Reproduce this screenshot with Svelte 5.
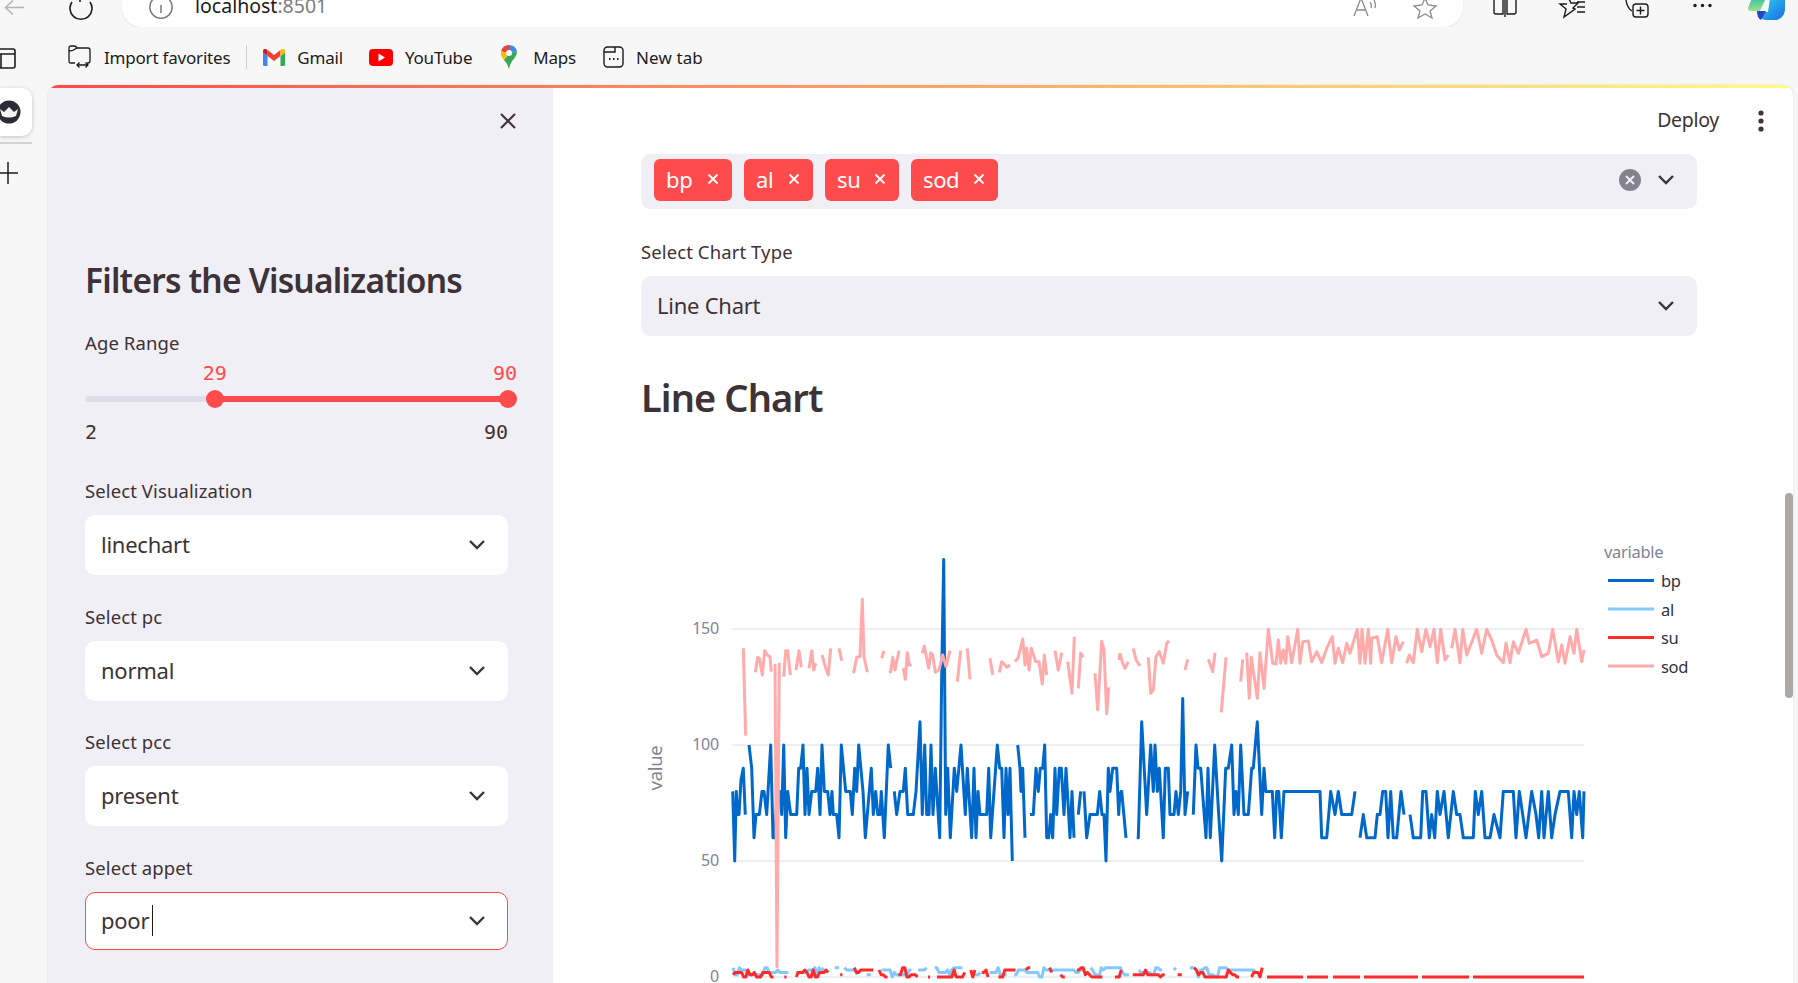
<script lang="ts">
	const selects = [
		{ label: "Select Visualization", value: "linechart" },
		{ label: "Select pc", value: "normal" },
		{ label: "Select pcc", value: "present" },
	];
	const tags = [
		{ name: "bp", width: 78 },
		{ name: "al", width: 69 },
		{ name: "su", width: 74 },
		{ name: "sod", width: 87 },
	];
	const legend = [
		{ name: "bp", color: "#0068c9" },
		{ name: "al", color: "#83c9ff" },
		{ name: "su", color: "#ff2b2b" },
		{ name: "sod", color: "#ffabab" },
	];

	const sliderMin = 2;
	const sliderMax = 90;
	const range = [29, 90];
	const pct = (v: number) => ((v - sliderMin) / (sliderMax - sliderMin)) * 100;

	// chart coords are page pixels, the traces were read off at 3x
	const yOf = (v: number) => 977 - v * 2.32;
	const ticks = [150, 100, 50, 0];

	function trace(raw: string, x0: number, byValue: boolean): string[] {
		return raw.split("|").map((seg) =>
			seg
				.trim()
				.split(",")
				.map((p) => {
					const [a, b] = p.trim().split(" ").map(Number);
					const y = byValue ? yOf(b) : 540 + b / 3;
					return `${(x0 + a / 3).toFixed(1)},${y.toFixed(1)}`;
				})
				.join(" "),
		);
	}

	const bp = [
		...trace(
			"278 80,284 50,289 80,292 70,297 70,303 85,310 90,316 70|327 100,335 90,342 60,348 70,358 70,366 80,372 80,380 70,392 100,399 60,405 60,411 80,419 80,425 70,431 100,437 60,443 80,452 70,470 70,476 90,482 90,489 100,495 70,501 90,507 70,515 80,527 80,533 90,540 70,546 100,553 80,563 80,570 70,576 80,580 70,590 70,597 60,604 100,617 80,631 80,637 70,644 90,650 80,656 100,669 80,676 60,682 70,694 90,700 70,707 80,713 70,720 70,724 80,733 60,745 100,752 90|763 80,770 70,780 80,790 80,796 90,803 70,820 70,828 80,840 110,847 70,854 100,860 70,867 70,873 100,879 70,886 90,899 60,905 130,911 180,917 70,923 90,931 60,943 90,950 80,963 100,976 70,982 90,995 60,1002 90,1008 60,1014 80,1020 70,1040 70,1046 90,1052 60,1062 80,1072 100,1079 90,1085 90,1092 60,1098 90,1104 70,1110 90,1117 50|1133 100,1140 90,1143 80,1148 90,1155 60|1170 70,1180 70,1188 90,1195 80,1201 90,1208 90,1214 100,1220 60,1226 60,1232 70,1238 60,1245 90,1250 70,1258 90,1264 90,1272 70,1278 90,1290 60,1296 80,1302 60|1315 70,1322 80|1332 80,1340 60,1350 70,1372 70,1379 80,1386 70,1392 70,1398 50,1405 90,1410 80,1418 90,1430 90,1436 70,1440 80",
			640,
			true,
		),
		...trace(
			"0 80,5 80,18 60|50 60,55 60,65 110,80 70,92 100,100 80,105 100,112 80,118 90,130 60,136 90,145 90,150 70,162 70,168 80,175 70,182 80,188 120,195 70,203 80|220 70,228 100,234 90,242 90,258 60,264 90,271 60,284 100,296 70,305 50,317 90,325 90,335 100,342 70,348 80,355 70,362 100,372 70,385 70,395 90,400 90,412 110,425 70,432 90,437 80,457 80,464 60,470 80,476 80,484 60,492 80,600 80,605 60,620 60,632 80,645 70,655 80,665 70,695 70,705 80|720 60,730 70,740 60,765 60,772 70,780 70,788 80,797 80,804 60,812 80,820 60,830 60,843 80,852 70|870 70,880 60,902 60,908 80,918 80,928 60,935 70,944 60,952 80,960 70,972 80,985 60,1000 80,1010 70,1020 70,1030 60,1060 60,1066 80,1075 70,1085 80,1095 60,1110 60,1122 70,1140 60,1150 80,1180 80,1188 60,1198 80,1208 70,1218 60,1235 80,1248 70,1256 60,1265 80,1272 60,1285 80,1295 60,1305 70,1320 80,1345 80,1355 60,1362 80,1370 70,1378 80,1388 60,1392 80",
			1120,
			true,
		),
	];

	const sod = [
		...trace(
			"310 325,317 587|346 397,353 352,358 355,367 405,374 332,382 345,390 350,394 395|405 372,411 1280,418 368|431 410,437 332,443 332,451 405|468 390,477 332,484 382|507 385,515 332,521 390,527 370|546 345,556 380,565 405,572 325|597 325,605 362|637 397,642 395,650 352,660 350,667 178,672 350,682 397|725 355,732 332|747 397,752 395,758 352,765 390,777 332|790 385,796 418,802 338,808 375,815 375|847 340,853 318,858 345,866 385,872 338,878 345,886 397,897 390,908 345,918 380,930 332|952 425,962 332|982 325,990 418|1050 355,1058 405|1078 397,1085 365,1095 375,1100 382,1110 375|1125 365,1135 352,1148 297,1155 375,1160 325,1167 390,1174 325,1187 365,1197 365,1207 432,1213 345,1220 405|1245 332,1255 390,1265 338|1283 365,1296 460,1303 290|1315 445,1322 340,1330 352|1365 400,1373 510,1385 304,1392 330,1400 522,1406 442|1437 360,1440 340",
			640,
			false,
		),
		...trace(
			"0 340,8 370,15 385,25 365|40 325,48 360,60 378|85 352,92 460,100 450,108 350,118 335,130 370,140 310,147 302|195 390,203 358|265 358,278 395,285 338|318 352,304 517|362 425,368 358|380 338,388 475,394 352,412 475,420 338,432 445,445 268,458 370,468 372,475 300,482 370,490 330,497 370,503 290,515 368,533 268,540 370,548 305,565 303,575 365,590 335,605 368,620 325,637 290,645 370,655 325,668 368,680 310,690 340,712 268,720 370,726 268,735 370,745 268,752 370,755 295,772 290,785 368,803 268,815 368,828 290,838 330,850 305|860 370,868 345,880 368,892 268,905 335,918 268,930 320,942 268,952 368,962 268,975 360,985 345|995 325,1005 268,1020 368,1028 268,1040 345,1070 268,1085 340,1100 268,1115 300,1130 345,1150 368,1158 310,1170 368,1180 305,1195 340,1218 268,1228 310,1250 300,1265 350,1285 340,1298 268,1315 365,1325 315,1335 370,1350 290,1362 340,1370 268,1385 365,1392 330",
			1120,
			false,
		),
	];

	// al and su stay in single digits near the axis: clumps of small bumps with gaps
	function noise(seed: number, maxV: number, skew: number, gapRate: number, gapLen: number): string[] {
		let s = seed;
		const rnd = () => {
			s = (s * 1664525 + 1013904223) % 4294967296;
			return s / 4294967296;
		};
		const out: string[] = [];
		let cur: string[] = [];
		let prev = 0;
		for (let x = 733; x < 1264; x += 2.13) {
			if (rnd() < gapRate) {
				if (cur.length > 1) out.push(cur.join(" "));
				cur = [];
				x += 1 + rnd() * gapLen;
				continue;
			}
			const v = Math.round(Math.pow(rnd(), skew) * maxV);
			// half the points keep the last value, which gives the flat blocks
			prev = rnd() < 0.5 ? prev : v;
			cur.push(`${x.toFixed(1)},${yOf(prev).toFixed(1)}`);
		}
		if (cur.length > 1) out.push(cur.join(" "));
		return out;
	}
	const al = noise(7, 4, 0.6, 0.09, 7);
	const su = noise(23, 4, 1.7, 0.08, 8);
	const suFlat = [
		[1267, 1303],
		[1307, 1328],
		[1333, 1360],
		[1364, 1418],
		[1422, 1469],
		[1473, 1584],
	];
</script>

<div class="toolbar">
	<svg class="toolbar__left" width="122" height="27" viewBox="0 0 122 27" fill="none">
		<path d="M24 7.5H6M13 0.5 5.5 7.5l7.5 7" stroke="#b5b5b5" stroke-width="1.6" />
		<path d="M72 2a11 11 0 1 0 18 0M80 -3v5" stroke="#1c1c1c" stroke-width="1.6" />
	</svg>
	<div class="address">
		<svg width="26" height="27" viewBox="0 0 26 27" fill="none">
			<circle cx="13" cy="7" r="11.2" stroke="#7b7b7b" stroke-width="1.5" />
			<path d="M13 5v8" stroke="#7b7b7b" stroke-width="1.5" />
		</svg>
		<span class="address__text">localhost<span class="address__port">:8501</span></span>
		<span class="address__spacer"></span>
		<svg width="24" height="27" viewBox="0 0 24 27" fill="none">
			<path d="M1 16 8 -2l7 18M4 10h8M17 2q2 3 1 6M21 0q2 4 1 8" stroke="#8a8a8a" stroke-width="1.3" />
		</svg>
		<svg class="address__star" width="26" height="27" viewBox="0 0 26 27" fill="none">
			<path d="M13 -2 16 5 24 6 18 11 20 18 13 14 6 18 8 11 2 6 10 5Z" stroke="#8a8a8a" stroke-width="1.3" />
		</svg>
	</div>
	<svg class="toolbar__right" width="335" height="27" viewBox="1463 0 335 27" fill="none">
		<path d="M1503 -2v16h-7q-2 0-2-2V-2M1507 -2v16h7q2 0 2-2V-2M1505 -2v19" stroke="#1c1c1c" stroke-width="1.4" />
		<path d="M1568 -3l3 6 7 0-5 5 2 1-11 8 2-8-6-5 7 0M1577 2h8M1577 7h8M1577 12h8" stroke="#1c1c1c" stroke-width="1.4" />
		<path d="M1626 0q1 8 6 11" stroke="#1c1c1c" stroke-width="1.4" />
		<rect x="1633" y="4" width="15" height="13" rx="3" stroke="#1c1c1c" stroke-width="1.4" />
		<path d="M1640.5 6.5v8M1636.5 10.5h8" stroke="#1c1c1c" stroke-width="1.4" />
		<g fill="#1c1c1c"><circle cx="1695" cy="5.5" r="1.7" /><circle cx="1702.5" cy="5.5" r="1.7" /><circle cx="1710" cy="5.5" r="1.7" /></g>
		<defs>
			<linearGradient id="cop-a" x1="0" y1="0" x2="0" y2="1"><stop offset="0" stop-color="#36c2a0" /><stop offset="1" stop-color="#9fe08a" /></linearGradient>
			<linearGradient id="cop-b" x1="0" y1="0" x2="1" y2="1"><stop offset="0" stop-color="#2fd0f0" /><stop offset="1" stop-color="#1a6fe0" /></linearGradient>
		</defs>
		<path d="M1752 -2h14l-6 13h-10q-2 0-2-3Z" fill="url(#cop-a)" />
		<path d="M1770 -2h15v11q0 8-8 11h-11q-4 0-5-3l-2-5h9Z" fill="url(#cop-b)" />
		<path d="M1757 11h9l-5 9q-4-2-4-9Z" fill="#2447c8" />
	</svg>
</div>

<div class="bookmarks">
	<svg class="bookmarks__tabs" width="17" height="24" viewBox="0 0 17 24" fill="none">
		<path d="M-3 2h16q2 0 2 2v15q0 2-2 2H-3M-3 7h18M1 7v14" stroke="#1c1c1c" stroke-width="1.6" />
	</svg>
	<div class="bm bm--import">
		<svg width="24" height="24" viewBox="0 0 24 24" fill="none" stroke="#1c1c1c" stroke-width="1.3">
			<path d="M7 18H3q-2 0-2-2V3q0-2 2-2h3q2 0 3 2h11q2 0 2 2v11q0 2-2 2h-1" />
			<path d="M1 6q4 0 8-3M9 20h11M11.500 17.500 9 20l2.500 2.500M17.500 17.500 20 20l-2.500 2.500" />
		</svg>
		<span>Import favorites</span>
	</div>
	<span class="bm__sep"></span>
	<div class="bm">
		<svg width="22" height="17" viewBox="0 0 22 17">
			<path d="M1.500 17H4.500V7L0 3.500V15.500Q0 17 1.500 17Z" fill="#4285f4" />
			<path d="M17.500 17H20.500Q22 17 22 15.500V3.500L17.500 7Z" fill="#34a853" />
			<path d="M4.500 7 11 12 17.500 7V1L11 6 4.500 1Z" fill="#ea4335" />
			<path d="M0 3.500 4.500 7V1L3 0Q0 -1 0 2.500Z" fill="#c5221f" />
			<path d="M17.500 7 22 3.500V2.500Q22 -1 19 0L17.500 1Z" fill="#fbbc04" />
		</svg>
		<span>Gmail</span>
	</div>
	<div class="bm">
		<svg width="24" height="17" viewBox="0 0 24 17">
			<rect width="24" height="17" rx="4" fill="#f00" />
			<path d="M9.500 4.500 16 8.500 9.500 12.500Z" fill="#fff" />
		</svg>
		<span>YouTube</span>
	</div>
	<div class="bm bm--maps">
		<svg width="16" height="24" viewBox="0 0 16 24">
			<path d="M8 0Q14 0 16 6L8 9Z" fill="#4285f4" />
			<path d="M8 0Q2 0 0 6L8 9Z" fill="#ea4335" />
			<path d="M0 6Q-1 11 3 15L8 9Z" fill="#fbbc04" />
			<path d="M16 6Q16 11 11 16 9 19 8 24 7 19 3 15L8 9Z" fill="#34a853" />
			<circle cx="8" cy="8" r="3" fill="#fff" />
		</svg>
		<span>Maps</span>
	</div>
	<div class="bm bm--newtab">
		<svg width="21" height="22" viewBox="0 0 21 22" fill="none" stroke="#1c1c1c" stroke-width="1.4">
			<rect x="1" y="1" width="19" height="20" rx="3.500" />
			<path d="M1 6H12V1" />
			<path d="M6 13h1.500M10 13h1.500M14 13h1.500" stroke-width="2" />
		</svg>
		<span>New tab</span>
	</div>
</div>

<div class="window">
	<div class="rail">
		<div class="rail__tab">
			<svg width="32" height="32" viewBox="0 0 32 32">
				<circle cx="9" cy="16" r="11.500" fill="#2b2b38" />
				<path d="M0 13l4 3 5-5 5 5 4-3-2 7q-7 3-14 0Z" fill="#f4f4f4" />
			</svg>
		</div>
		<div class="rail__line"></div>
		<svg class="rail__plus" width="20" height="22" viewBox="0 0 20 22" stroke="#1c1c1c" stroke-width="1.5">
			<path d="M8 0v22M-2 11h20" />
		</svg>
	</div>

	<div class="app">
		<div class="app__stripe"></div>
		<div class="app__body">
			<aside class="side">
				<div class="side__top">
					<svg width="18" height="18" viewBox="0 0 18 18" stroke="#3d3237" stroke-width="2">
						<path d="M2 2l14 14M16 2 2 16" />
					</svg>
				</div>
				<h2 class="side__title">Filters the Visualizations</h2>
				<div class="label label--age">Age Range</div>
				<div class="slider">
					<div class="slider__values">
						{#each range as v}
							<span class="slider__value" style="left: {pct(v)}%">{v}</span>
						{/each}
					</div>
					<div class="slider__track">
						<div class="slider__fill" style="left: {pct(range[0])}%; width: {pct(range[1]) - pct(range[0])}%"></div>
						{#each range as v}
							<span class="slider__thumb" style="left: {pct(v)}%"></span>
						{/each}
					</div>
					<div class="slider__ticks"><span>{sliderMin}</span><span>{sliderMax}</span></div>
				</div>

				{#each selects as s}
					<div class="field">
						<div class="label">{s.label}</div>
						<div class="box box--white">
							<span class="box__value">{s.value}</span>
							<svg class="chev" width="18" height="18" viewBox="0 0 18 18" fill="none" stroke="#3d3237" stroke-width="2.400"><path d="M2 5l7 7 7-7" /></svg>
						</div>
					</div>
				{/each}
				<div class="field">
					<div class="label">Select appet</div>
					<div class="box box--white box--focus">
						<span class="box__value">poor</span><span class="caret"></span>
						<svg class="chev" width="18" height="18" viewBox="0 0 18 18" fill="none" stroke="#3d3237" stroke-width="2.400"><path d="M2 5l7 7 7-7" /></svg>
					</div>
				</div>
			</aside>

			<main class="main">
				<div class="topbar">
					<span class="topbar__deploy">Deploy</span>
					<svg width="6" height="22" viewBox="0 0 6 22" fill="#3d3237">
						<circle cx="3" cy="3" r="2.600" /><circle cx="3" cy="11" r="2.600" /><circle cx="3" cy="19" r="2.600" />
					</svg>
				</div>
				<div class="content">
					<div class="multi">
						{#each tags as t}
							<span class="tag" style="width: {t.width}px">
								{t.name}
								<svg width="12" height="12" viewBox="0 0 12 12" stroke="#fff" stroke-width="1.800"><path d="M1.500 1.500l9 9M10.500 1.500l-9 9" /></svg>
							</span>
						{/each}
						<span class="multi__spacer"></span>
						<svg class="multi__clear" width="22" height="22" viewBox="0 0 22 22">
							<circle cx="11" cy="11" r="11" fill="#83838f" />
							<path d="M7 7l8 8M15 7l-8 8" stroke="#f0eff5" stroke-width="2" />
						</svg>
						<svg class="chev" width="18" height="18" viewBox="0 0 18 18" fill="none" stroke="#3d3237" stroke-width="2.400"><path d="M2 5l7 7 7-7" /></svg>
					</div>

					<div class="label label--chart">Select Chart Type</div>
					<div class="box">
						<span class="box__value">Line Chart</span>
						<svg class="chev" width="18" height="18" viewBox="0 0 18 18" fill="none" stroke="#3d3237" stroke-width="2.400"><path d="M2 5l7 7 7-7" /></svg>
					</div>

					<h2 class="main__title">Line Chart</h2>

					<svg class="chart" width="1056" height="503" viewBox="641 480 1056 503" fill="none">
						{#each ticks as t}
							<line x1="732" x2="1584" y1={yOf(t)} y2={yOf(t)} stroke="#e6eaf1" stroke-width="1.500" />
							<text x="719" y={yOf(t) + 5} text-anchor="end" class="chart__tick">{t}</text>
						{/each}
						<text class="chart__axis chart__axis--y" transform="translate(662 768) rotate(-90)" text-anchor="middle">value</text>

						<g stroke-width="3" stroke-linejoin="round">
							{#each bp as pts}<polyline points={pts} stroke="#0068c9" />{/each}
							{#each al as pts}<polyline points={pts} stroke="#83c9ff" />{/each}
							{#each su as pts}<polyline points={pts} stroke="#ff2b2b" />{/each}
							{#each suFlat as [a, b]}<line x1={a} x2={b} y1="977" y2="977" stroke="#ff2b2b" />{/each}
							{#each sod as pts}<polyline points={pts} stroke="#ffabab" />{/each}
						</g>

						<text x="1604" y="558" class="chart__axis">variable</text>
						{#each legend as l, i}
							<line x1="1608" x2="1654" y1={580.500 + i * 28.500} y2={580.500 + i * 28.500} stroke={l.color} stroke-width="3" />
							<text x="1661" y={587 + i * 28.500} class="chart__legend">{l.name}</text>
						{/each}
					</svg>
				</div>
				<div class="scrollthumb"></div>
			</main>
		</div>
	</div>
</div>

<style>
	:global(body) {
		margin: 0;
		background: #f7f7f7;
		height: 983px;
		overflow: hidden;
		font-family: "Noto Sans", sans-serif;
		color: #3d3237;
	}

	.toolbar {
		height: 27px;
		display: flex;
		overflow: hidden;
	}

	.toolbar__left,
	.toolbar__right {
		flex-shrink: 0;
	}

	.address {
		width: 1341px;
		height: 27px;
		background: #fff;
		border-radius: 0 0 20px 20px;
		box-shadow: 0 1px 2px rgba(0, 0, 0, 0.08);
		display: flex;
		align-items: flex-start;
		padding-left: 26px;
		padding-right: 25px;
		box-sizing: border-box;
	}

	.address__text {
		margin-left: 21px;
		margin-top: -6px;
		font-size: 19.500px;
		line-height: 24px;
		color: #1a1a1a;
	}

	.address__port {
		color: #7d7d7d;
	}

	.address__spacer {
		flex: 1;
	}

	.address__star {
		margin-left: 35px;
	}

	.bookmarks {
		height: 58px;
		box-sizing: border-box;
		padding-top: 2px;
		display: flex;
		align-items: center;
		gap: 26px;
		font-size: 17px;
		color: #1c1c1c;
	}

	.bookmarks__tabs {
		margin-right: 25px;
		margin-top: 3px;
	}

	.bm {
		display: flex;
		align-items: center;
		gap: 12px;
		letter-spacing: -0.2px;
	}

	.bm--maps {
		gap: 16px;
		margin-left: 3px;
	}

	.bm--newtab {
		margin-left: 1px;
		letter-spacing: 0.1px;
	}

	.bm__sep {
		width: 1px;
		height: 24px;
		background: #cfcfcf;
		margin: 0 -10px;
	}

	.window {
		display: flex;
		height: 898px;
	}

	.rail {
		width: 48px;
		flex-shrink: 0;
		padding-top: 3px;
	}

	.rail__tab {
		width: 32px;
		height: 48px;
		background: #fff;
		border-radius: 0 10px 10px 0;
		box-shadow: 0 1px 4px rgba(0, 0, 0, 0.22);
		display: flex;
		align-items: center;
	}

	.rail__line {
		width: 32px;
		height: 2px;
		background: #d3d3d3;
		margin-top: 6px;
	}

	.rail__plus {
		display: block;
		margin-top: 18px;
		overflow: visible;
	}

	.app {
		width: 1745px;
		flex-shrink: 0;
		border-radius: 10px 10px 0 0;
		overflow: hidden;
		background: #fff;
		box-shadow: 0 0 2px rgba(0, 0, 0, 0.16);
	}

	.app__stripe {
		height: 3px;
		background: linear-gradient(90deg, #ff4b4b, #fffd80);
	}

	.app__body {
		display: flex;
		height: 895px;
	}

	.side {
		width: 505px;
		flex-shrink: 0;
		box-sizing: border-box;
		padding: 0 45px 0 37px;
		background: #f0eff5;
	}

	.side__top {
		height: 167px;
		padding-top: 24px;
		box-sizing: border-box;
		display: flex;
		justify-content: flex-end;
		margin-right: -9px;
		align-items: flex-start;
	}

	.side__title {
		margin: 0;
		font-size: 33.500px;
		line-height: 50px;
		padding-bottom: 2px;
		font-weight: 600;
		letter-spacing: -0.8px;
		white-space: nowrap;
	}

	.label {
		font-size: 18.500px;
		line-height: 24px;
		letter-spacing: 0.1px;
	}

	.label--age {
		margin-top: 24px;
	}

	.label--chart {
		margin-top: 31px;
	}

	.slider {
		margin-top: 6px;
		font-family: "DejaVu Sans Mono", monospace;
		font-size: 20px;
	}

	.slider__values {
		position: relative;
		height: 24px;
		line-height: 24px;
		color: #ff4b4b;
	}

	.slider__value {
		position: absolute;
		transform: translateX(-50%);
	}

	.slider__value:last-child {
		transform: translateX(-62%);
	}

	.slider__track {
		position: relative;
		height: 6px;
		margin: 11px 0 0;
		background: #dfdde9;
		border-radius: 3px;
	}

	.slider__fill {
		position: absolute;
		top: 0;
		height: 6px;
		background: #ff4b4b;
	}

	.slider__thumb {
		position: absolute;
		top: -6px;
		width: 18px;
		height: 18px;
		margin-left: -9px;
		border-radius: 50%;
		background: #ff4b4b;
	}

	.slider__ticks {
		display: flex;
		justify-content: space-between;
		margin-top: 18px;
		height: 24px;
		line-height: 24px;
	}

	.field {
		margin-top: 35px;
	}

	.field + .field {
		margin-top: 29.500px;
	}

	.box {
		height: 60px;
		margin-top: 12px;
		background: #f0eff5;
		border-radius: 10px;
		display: flex;
		align-items: center;
		padding: 0 22px 0 16px;
		box-sizing: border-box;
		font-size: 22px;
		letter-spacing: -0.25px;
	}

	.box--white {
		background: #fff;
	}

	.box--focus {
		height: 58px;
		border: 1px solid #ff4b4b;
		padding: 0 21px 0 15px;
	}

	.box__value {
		flex: none;
		margin-top: -2px;
	}

	.caret {
		width: 1px;
		height: 31px;
		background: #1c1c1c;
		margin-left: 3px;
	}

	.box .chev {
		margin-left: auto;
	}

	.main {
		flex: 1;
		position: relative;
		min-width: 0;
		overflow: hidden;
	}

	.topbar {
		height: 66px;
		box-sizing: border-box;
		padding-bottom: 1px;
		display: flex;
		align-items: center;
		justify-content: flex-end;
		gap: 39px;
		padding-right: 29px;
		font-size: 19.500px;
	}

	.topbar__deploy {
		letter-spacing: -0.3px;
		margin-bottom: 2px;
	}

	.content {
		width: 1056px;
		margin-left: 88px;
	}

	.multi {
		height: 55px;
		background: #f0eff5;
		border-radius: 10px;
		display: flex;
		align-items: center;
		gap: 12px;
		padding: 0 22px 3px 13px;
		box-sizing: border-box;
	}

	.multi__spacer {
		flex: 1;
	}

	.multi__clear {
		margin-right: 4px;
	}

	.tag {
		height: 42px;
		background: #ff4b4b;
		color: #fff;
		border-radius: 6px;
		display: flex;
		align-items: center;
		justify-content: space-between;
		padding: 0 13px 2px 12px;
		box-sizing: border-box;
		font-size: 22px;
		letter-spacing: -0.4px;
	}

	.main__title {
		margin: 32px 0 0;
		font-size: 38px;
		line-height: 58px;
		font-weight: 600;
		letter-spacing: -0.9px;
	}

	.chart {
		display: block;
		margin-top: 54px;
		stroke-linecap: butt;
	}

	.chart__tick {
		fill: #808495;
		font-size: 16px;
		letter-spacing: -0.2px;
	}

	.chart__axis {
		fill: #808495;
		font-size: 16.500px;
		letter-spacing: -0.3px;
	}

	.chart__axis--y {
		font-size: 18.500px;
	}

	.chart__legend {
		fill: #31333f;
		font-size: 16.500px;
		letter-spacing: -0.3px;
	}

	.scrollthumb {
		position: absolute;
		right: 0;
		top: 405px;
		width: 8px;
		height: 205px;
		border-radius: 4px;
		background: #aca9a7;
	}
</style>
